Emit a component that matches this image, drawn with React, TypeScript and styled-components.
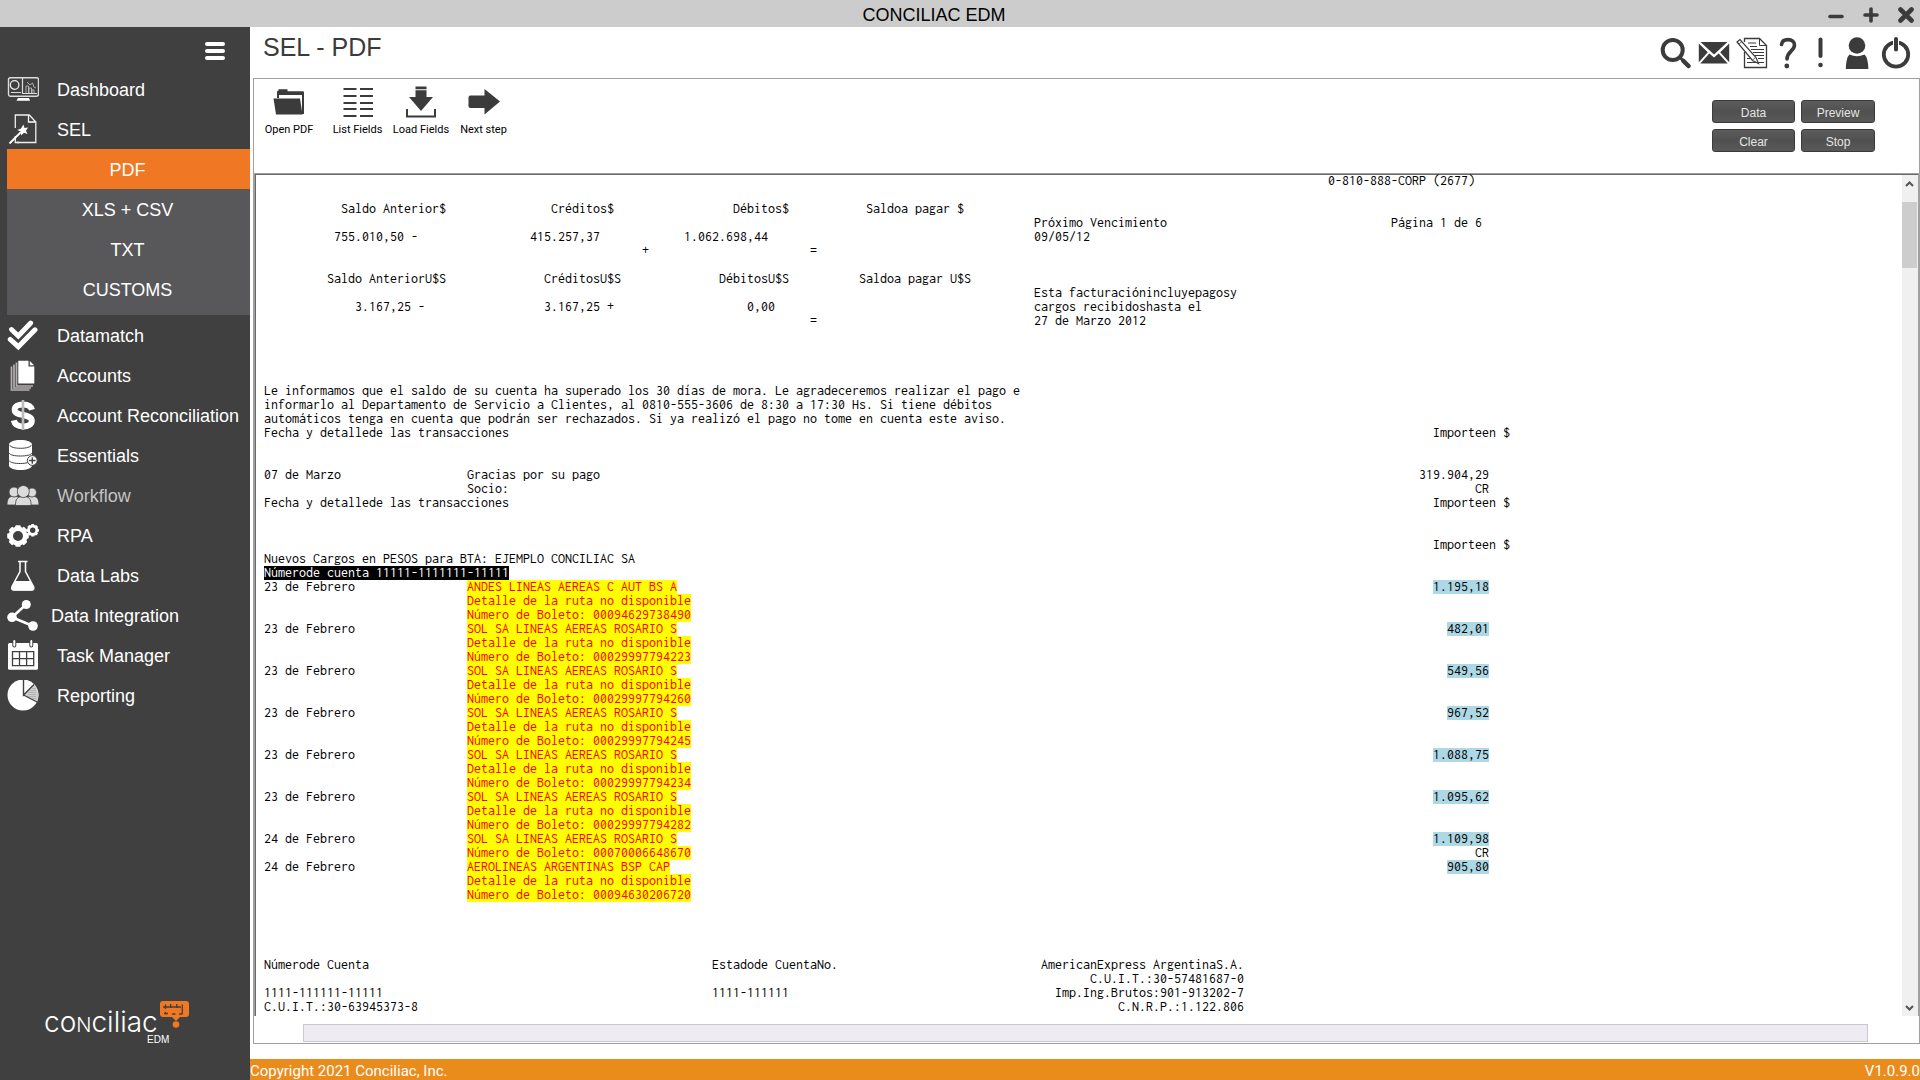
import React from "react";
import styled, { createGlobalStyle } from "styled-components";

const ink = "#3b3b3b";
const line = "#a0a0a0";

const GlobalStyle = createGlobalStyle`
  * { box-sizing: border-box; }
  body { margin: 0; background: #fff; font-family: "Liberation Sans", Arial, sans-serif; }
  button { font-family: inherit; border: 0; padding: 0; margin: 0; background: none; cursor: pointer; }
  svg { display: block; flex: none; }
`;

const Page = styled.div`
  min-height: 100vh;
  display: flex;
  flex-direction: column;
`;

const TitleBar = styled.header`
  height: 27px;
  flex: none;
  display: flex;
  align-items: center;
  background: #ccc;
  padding: 2px 6px 0 40px;
`;

const AppName = styled.div`
  flex: 1;
  text-align: center;
  font-size: 18px;
  line-height: 24px;
  color: #000;
`;

const WindowControls = styled.div`
  display: flex;
  gap: 19px;
`;

const IconButton = styled.button`
  display: flex;
  justify-content: center;
`;

const Body = styled.div`
  flex: 1;
  display: flex;
`;

const Sidebar = styled.aside`
  width: 250px;
  flex: none;
  display: flex;
  flex-direction: column;
  background: #404040;
`;

const MenuToggle = styled.div`
  height: 43px;
  display: flex;
  justify-content: flex-end;
  align-items: flex-start;
  padding: 14px 25px 0 0;
`;

const NavGroup = styled.nav`
  display: flex;
  flex-direction: column;
`;

const NavItem = styled.a<{ $near?: boolean; $muted?: boolean }>`
  height: 40px;
  display: flex;
  align-items: center;
  gap: ${(p) => (p.$near ? 12 : 18)}px;
  padding-left: 7px;
  font-size: 18px;
  line-height: 24px;
  white-space: nowrap;
  text-decoration: none;
  color: ${(p) => (p.$muted ? "#c4c4c4" : "#fff")};
`;

const SubMenu = styled.div`
  margin: -1px 0 1px 7px;
  padding-bottom: 6px;
  background: #58585a;
`;

const SubItem = styled.a<{ $active?: boolean }>`
  height: 40px;
  display: flex;
  align-items: center;
  justify-content: center;
  padding: 2px 2px 0 0;
  font-size: 18px;
  line-height: 24px;
  text-decoration: none;
  color: #fff;
  background: ${(p) => (p.$active ? "#f07824" : "transparent")};
`;

const Brand = styled.div`
  margin-top: auto;
  padding: 0 0 36px 44px;
`;

const Main = styled.main`
  flex: 1;
  min-width: 0;
  display: flex;
  flex-direction: column;
`;

const PageHeader = styled.div`
  height: 51px;
  display: flex;
  align-items: flex-start;
  justify-content: space-between;
  padding: 4px 8px 0 13px;
`;

const PageTitle = styled.h1`
  margin: 0;
  font-size: 25px;
  font-weight: 400;
  line-height: 32px;
  color: ${ink};
`;

const Actions = styled.div`
  display: flex;
  gap: 6px;
  padding-top: 6px;
`;

const Panel = styled.section`
  flex: 1;
  display: flex;
  flex-direction: column;
  margin: 0 0 15px 3px;
  border: 1px solid ${line};
`;

const Toolbar = styled.div`
  height: 95px;
  display: flex;
  align-items: flex-start;
  justify-content: space-between;
  padding: 7px 44px 0 0;
  border-bottom: 1px solid ${line};
`;

const Tools = styled.div`
  display: grid;
  grid-template-columns: 70px 67px 60px 65px;
`;

const Tool = styled.button`
  display: flex;
  flex-direction: column;
  align-items: center;
  gap: 4px;
  font-family: Roboto, "Liberation Sans", sans-serif;
  font-size: 11px;
  line-height: 16px;
  white-space: nowrap;
  color: #000;
`;

const Commands = styled.div`
  display: grid;
  grid-template-columns: 83px 74px;
  gap: 6px;
  padding-top: 14px;
`;

const Command = styled.button`
  height: 23px;
  padding-top: 2px;
  border: 1px solid #3a3a3a;
  border-radius: 3px;
  background: linear-gradient(#5c5c5c, #505050 50%, #595959);
  color: #e6e6e6;
  font-size: 12px;
  line-height: 18px;
`;

const Viewer = styled.div`
  flex: 1;
  display: flex;
  min-width: 0;
  border-left: 1px solid ${line};
  border-right: 1px solid ${line};
  box-shadow: inset 1px 1px #696969;
`;

const Report = styled.pre`
  flex: 1;
  min-width: 0;
  margin: 0;
  padding: 0 0 2px 9px;
  overflow: hidden;
  font-family: Inconsolata, "Noto Sans Mono CJK SC", "Liberation Mono", monospace;
  font-size: 14px;
  line-height: 14px;
  color: #000;
`;

const ReportLine = styled.div`
  height: 14px;
`;

type Tone = "plain" | "field" | "amount" | "key";
const tones: Record<Tone, [string, string]> = {
  plain: ["transparent", "#000"],
  field: ["#ff0", "#f00"],
  amount: ["#add8e6", "#000"],
  key: ["#000", "#fff"],
};

const Mark = styled.span<{ $tone: Tone }>`
  display: inline-block;
  height: 14px;
  vertical-align: top;
  background: ${(p) => tones[p.$tone][0]};
  color: ${(p) => tones[p.$tone][1]};
`;

const VerticalBar = styled.div`
  width: 16px;
  margin-top: 1px;
  display: flex;
  flex-direction: column;
  background: #f0f0f0;
`;

const Thumb = styled.div`
  height: 66px;
  margin: 9px 1px auto 0;
  background: #cdcdcd;
`;

const HorizontalBar = styled.div`
  height: 18px;
  margin: 8px 51px 1px 49px;
  background: #eeecf2;
  border: 1px solid #c9c8d6;
`;

const Footer = styled.footer`
  height: 21px;
  flex: none;
  display: flex;
  justify-content: space-between;
  background: #ea8c1c;
  color: #fff;
  font-family: Roboto, sans-serif;
  font-size: 15px;
  line-height: 24px;
`;

const Art = ({ w = 32, h = 32, children }: { w?: number; h?: number; children: React.ReactNode }) => (
  <svg width={w} height={h} viewBox={`0 0 ${w} ${h}`} fill="none" aria-hidden="true">
    {children}
  </svg>
);

const gear = (cx: number, cy: number, r: number, hole: number, teeth: number) => (
  <g>
    <circle cx={cx} cy={cy} r={(r * 0.88 + hole) / 2} stroke="#fff" strokeWidth={r * 0.88 - hole} />
    {Array.from({ length: teeth }, (_, i) => (
      <rect
        key={i}
        x={cx - r * 0.25}
        y={cy - r}
        width={r * 0.5}
        height={r * 0.3}
        rx={r * 0.1}
        fill="#fff"
        transform={`rotate(${(i * 360) / teeth} ${cx} ${cy})`}
      />
    ))}
  </g>
);

const icons: Record<string, React.ReactNode> = {
  dashboard: (
    <Art>
      <rect x="1.5" y="3.7" width="30" height="18.6" rx="2" stroke="#ddd" strokeWidth="1.4" />
      <circle cx="7.6" cy="11" r="4.3" stroke="#eee" strokeWidth="1.2" />
      <path d="M4 18.5h10M15.5 4v15.500H30" stroke="#ddd" strokeWidth="1.2" />
      <path d="M19 19v-7h2.500v7M22 19v-5h2.500v5M25 19v-3h2v3M20 8l3 3 2.500-2 1.500 4 2 1" stroke="#ccc" strokeWidth=".8" />
      <path d="M11 24h11l1 2.700H9.500z" fill="#fff" />
    </Art>
  ),
  sel: (
    <Art>
      <path d="M8.300 14V1h14l6.500 7v20.500H10" stroke="#eee" strokeWidth="1.300" />
      <path d="M8.300 22v6.500H12" stroke="#eee" strokeWidth="1.300" />
      <path d="M21.500 1.200V8h7" stroke="#fff" strokeWidth="1.300" />
      <path d="M2.500 29.500 14 18" stroke="#fff" strokeWidth="1.800" />
      <path d="m16.500 10.500 1 3.500 3.700-.6-2.300 3 1.600 3.500-3.500-1.100-3 2.700-.1-3.900-3.700-1.600 3.500-1.300z" fill="#fff" />
    </Art>
  ),
  datamatch: (
    <Art>
      <path d="m4.500 9.500 6.800 6.500L23.700 3" stroke="#fff" strokeWidth="4.800" strokeLinecap="round" />
      <path d="m3.300 19.500 8 7.200L28 9.800" stroke="#fff" strokeWidth="5" strokeLinecap="round" />
    </Art>
  ),
  accounts: (
    <Art>
      <path d="M4.500 6.500v23.500h18M7 4.500V28h17M9.500 2.500V26H26" stroke="#b5b0b0" strokeWidth="1.700" />
      <path d="M11.300.8h10.200v5.700h5.800v17H11.300z" fill="#fff" />
      <path d="m22.800 1 4.300 4.300h-4.300z" fill="#fff" />
    </Art>
  ),
  dollar: (
    <Art>
      <path
        d="M25 9.800C24 5.800 20.500 4.400 16 4.400c-5 0-8.300 2-8.300 5.300 0 3.800 4 4.400 8.300 5.300 4.800 1 8.800 1.900 8.800 5.800 0 3.600-3.600 5.600-8.800 5.600-5 0-8.300-1.800-9.200-6"
        stroke="#fff"
        strokeWidth="6"
      />
      <path d="M16 0v30" stroke="#bbb" strokeWidth="2.600" />
    </Art>
  ),
  essentials: (
    <Art>
      <path d="M2 4.500C2 2 7 0 13.500 0S25 2 25 4.500v21c0 2.500-5 4.500-11.500 4.500S2 28 2 25.500z" fill="#fff" />
      <path d="M2.500 5c1 2 5 3.300 11 3.300S23.500 7 24.500 5M2 13c1 2 5.500 3 11.500 3S24 15 25 13M2 20.500c1 2 5.500 3 11.500 3 3 0 5-.3 7-.8" stroke="#404040" strokeWidth="1" />
      <circle cx="25.300" cy="20.500" r="4.900" fill="#fff" stroke="#404040" strokeWidth="1" />
      <path d="M25.300 17.300v6.400M22.100 20.500h6.400" stroke="#404040" strokeWidth="1.300" />
    </Art>
  ),
  workflow: (
    <Art>
      <g fill="#dcdcdc" stroke="#404040" strokeWidth=".8">
        <path d="M0 25c0-6 2-9 7-9s7 3 7 9zM18 25c0-6 2-9 7-9s7 3 7 9z" />
        <circle cx="7" cy="12" r="5" />
        <circle cx="25" cy="12.500" r="4.500" />
        <path d="M8.500 25.500c0-7 2-9 7.800-9s7.800 2 7.800 9z" />
        <circle cx="16.300" cy="11.500" r="6" />
      </g>
    </Art>
  ),
  rpa: (
    <Art>
      {gear(11, 16, 10.8, 5, 8)}
      {gear(25.7, 10.3, 6.2, 2.7, 8)}
    </Art>
  ),
  labs: (
    <Art>
      <path d="M11 1.400h9.500M13 2v9.500L5 26.500c-1 2 0 3.500 2 3.500h17.500c2 0 3-1.500 2-3.500l-8-15V2" stroke="#fff" strokeWidth="1.500" />
      <path d="M8 21h15.500l3.500 6.500c.5 1.500-.5 3-2 3H6.500c-1.500 0-2.500-1.500-2-3z" fill="#fff" />
    </Art>
  ),
  integration: (
    <Art>
      <path d="M19.300 4.300 5 17.300 26 26" stroke="#fff" strokeWidth="2.600" />
      <g fill="#fff">
        <circle cx="19.300" cy="4.500" r="4.500" />
        <circle cx="5" cy="17.300" r="4.800" />
        <circle cx="26" cy="26" r="4.800" />
      </g>
    </Art>
  ),
  tasks: (
    <Art>
      <rect x="1" y="3" width="30" height="26.700" rx="1.500" fill="#fff" />
      <path d="M7.300 1v4.500M24.300 1v4.500" stroke="#404040" strokeWidth="4" strokeLinecap="round" />
      <path d="M7.300 1v4.500M24.300 1v4.500" stroke="#fff" strokeWidth="2" strokeLinecap="round" />
      <path d="M5.500 11.700h21.200v14H5.500zM5.500 18.700h21.200M12.500 11.700v14M19.600 11.700v14" stroke="#404040" strokeWidth="1.300" />
    </Art>
  ),
  reporting: (
    <Art>
      <circle cx="16" cy="15" r="15.500" fill="#fff" />
      <path d="M16 15 27 4.500A15.500 15.500 0 0 1 30 21.500z" fill="#cfcfcf" />
      <path d="M16.500-1v16L27 4.500M16.500 15 30 22" stroke="#404040" strokeWidth="1.400" />
      <path d="M22 12v5M24 10v8M26 8v11M28 8v12" stroke="#777" strokeWidth=".6" strokeDasharray="1 1" />
    </Art>
  ),
};

const Logo = () => (
  <svg width="146" height="43" viewBox="0 0 146 43" role="img" aria-label="Conciliac EDM">
    <text x="0" y="31" fill="#fff" fontFamily="Inter, sans-serif" fontWeight="300" fontSize="28">
      co<tspan fontSize="20">N</tspan>ciliac
      <tspan x="103" y="42" fontFamily="Liberation Sans, sans-serif" fontWeight="400" fontSize="10">
        EDM
      </tspan>
    </text>
    <path d="M119 0h23q3 0 3 3v10q0 3-3 3h-6l-4 4-4-4h-9q-3 0-3-3V3q0-3 3-3z" fill="#f07824" />
    <path d="M119 6h18M121.500 3.500v10M126.700 3v4M132.700 3v4M138.300 3.500v9.500M120 12.500h4M128 13h3.500M135 13h3.500" stroke="#404040" strokeWidth="1.300" />
    <circle cx="122" cy="9.500" r="1.800" fill="#f07824" />
    <circle cx="127" cy="10" r="2.600" fill="#f07824" />
    <circle cx="133.500" cy="10" r="2.600" fill="#f07824" />
    <circle cx="132" cy="23.500" r="3.300" fill="#f07824" />
  </svg>
);

type Nav = { label: string; icon: string; near?: boolean; muted?: boolean };
const topNav: Nav[] = [
  { label: "Dashboard", icon: "dashboard" },
  { label: "SEL", icon: "sel" },
];
const subNav = ["PDF", "XLS + CSV", "TXT", "CUSTOMS"];
const lowNav: Nav[] = [
  { label: "Datamatch", icon: "datamatch" },
  { label: "Accounts", icon: "accounts" },
  { label: "Account Reconciliation", icon: "dollar" },
  { label: "Essentials", icon: "essentials" },
  { label: "Workflow", icon: "workflow", muted: true },
  { label: "RPA", icon: "rpa" },
  { label: "Data Labs", icon: "labs" },
  { label: "Data Integration", icon: "integration", near: true },
  { label: "Task Manager", icon: "tasks" },
  { label: "Reporting", icon: "reporting" },
];

const NavList = ({ items }: { items: Nav[] }) => (
  <NavGroup>
    {items.map((n) => (
      <NavItem key={n.label} href="#" $near={n.near} $muted={n.muted}>
        {icons[n.icon]}
        {n.label}
      </NavItem>
    ))}
  </NavGroup>
);

const actions: { label: string; art: React.ReactNode }[] = [
  {
    label: "Search",
    art: (
      <Art>
        <circle cx="12.700" cy="13" r="10" stroke={ink} strokeWidth="4" />
        <path d="m20 20.500 3.500 3.500" stroke={ink} strokeWidth="3" />
        <path d="m23.500 24 5 5" stroke={ink} strokeWidth="4.500" strokeLinecap="round" />
      </Art>
    ),
  },
  {
    label: "Mail",
    art: (
      <Art>
        <path d="M2.500 5h27L16 17.500zM.8 6.500l9 8.700-9 10zM31.200 6.500l-9 8.700 9 10zM11.300 16.500l4.700 4 4.700-4 9 10H2.300z" fill={ink} />
      </Art>
    ),
  },
  {
    label: "Notes",
    art: (
      <Art>
        <path d="M8.500 5V1.500h15l7 7V30.500h-22V15" stroke={ink} strokeWidth="1.300" />
        <path d="M23.500 1.500v7h7" stroke={ink} strokeWidth="1" />
        <path d="M12 6h8M14 9.500h7M15 12.500h13M17 15.500h11M18 18.500h10M11 21.500h6M22 21.500h6M11 25.500h17" stroke={ink} strokeWidth="1" />
        <path d="m1 5 3-2.500 16 18 2.500 6-6-3z" fill="#fff" stroke={ink} strokeWidth="1.200" />
        <path d="m3 7 3-2.500M16.500 23l3-2.500" stroke={ink} strokeWidth=".8" />
      </Art>
    ),
  },
  {
    label: "Help",
    art: (
      <Art w={28}>
        <path d="M7.500 7.500C8 4 10.500 2.600 14 2.600c4 0 6.500 2.200 6.500 5.400 0 6-7.500 6.500-7.500 14" stroke={ink} strokeWidth="3.600" strokeLinecap="round" />
        <circle cx="12.800" cy="29" r="2.400" fill={ink} />
      </Art>
    ),
  },
  {
    label: "Alerts",
    art: (
      <Art w={26}>
        <path d="M12.500 2.500v16.500" stroke={ink} strokeWidth="4" strokeLinecap="round" />
        <circle cx="12.500" cy="28" r="2.300" fill={ink} />
      </Art>
    ),
  },
  {
    label: "User",
    art: (
      <Art w={34}>
        <circle cx="17" cy="8.500" r="8.300" fill={ink} />
        <path d="M9.500 17.500q7.500 3.500 15 0 3.500 3 3.900 14.500H5.800q.3-11.500 3.700-14.500z" fill={ink} />
      </Art>
    ),
  },
  {
    label: "Log out",
    art: (
      <Art>
        <circle cx="16" cy="17.500" r="12.200" stroke={ink} strokeWidth="3.800" />
        <path d="M16 1v12" stroke="#fff" strokeWidth="6" />
        <path d="M16 2v10.500" stroke={ink} strokeWidth="4" strokeLinecap="round" />
      </Art>
    ),
  },
];

const tools: { label: string; art: React.ReactNode }[] = [
  {
    label: "Open PDF",
    art: (
      <Art>
        <path d="M4 12V6q0-1.500 1.500-1.500V3.300h9v2H30q1 0 1 1V28h-2V9H6v3z" fill={ink} />
        <path d="M.5 12.500h26.500l2.500 16H3z" fill={ink} />
      </Art>
    ),
  },
  {
    label: "List Fields",
    art: (
      <Art>
        {[3, 10, 17, 23, 30].map((y) => (
          <path key={y} d={`M1.500 ${y}h13M18 ${y}h13`} stroke={ink} strokeWidth="2" />
        ))}
      </Art>
    ),
  },
  {
    label: "Load Fields",
    art: (
      <Art>
        <path d="M10.500.5h11v2.800h-11zM10.500 4.300h11V11h6.500L16 25 4 11h6.500z" fill={ink} />
        <path d="M2 23v7.500h28V23" stroke={ink} strokeWidth="2" />
      </Art>
    ),
  },
  {
    label: "Next step",
    art: (
      <Art>
        <path d="M2.500 9.500h14V3L32 15.500 16.500 28.500V22h-14Q.5 22 .5 20v-8.500q0-2 2-2z" fill={ink} />
      </Art>
    ),
  },
];

type Seg = [col: number, text: string, tone?: Tone];
const report: Record<number, Seg[]> = {
  0: [[152, "0-810-888-CORP (2677)"]],
  2: [[11, "Saldo Anterior$"], [41, "Créditos$"], [67, "Débitos$"], [86, "Saldoa pagar $"]],
  3: [[110, "Próximo Vencimiento"], [161, "Página 1 de 6"]],
  4: [[10, "755.010,50 -"], [38, "415.257,37"], [60, "1.062.698,44"], [110, "09/05/12"]],
  5: [[54, "+"], [78, "="]],
  7: [[9, "Saldo AnteriorU$S"], [40, "CréditosU$S"], [65, "DébitosU$S"], [85, "Saldoa pagar U$S"]],
  8: [[110, "Esta facturaciónincluyepagosy"]],
  9: [[13, "3.167,25 -"], [40, "3.167,25 +"], [69, "0,00"], [110, "cargos recibidoshasta el"]],
  10: [[78, "="], [110, "27 de Marzo 2012"]],
  15: [[0, "Le informamos que el saldo de su cuenta ha superado los 30 días de mora. Le agradeceremos realizar el pago e"]],
  16: [[0, "informarlo al Departamento de Servicio a Clientes, al 0810-555-3606 de 8:30 a 17:30 Hs. Si tiene débitos"]],
  17: [[0, "automáticos tenga en cuenta que podrán ser rechazados. Si ya realizó el pago no tome en cuenta este aviso."]],
  18: [[0, "Fecha y detallede las transacciones"], [167, "Importeen $"]],
  21: [[0, "07 de Marzo"], [29, "Gracias por su pago"], [165, "319.904,29"]],
  22: [[29, "Socio:"], [173, "CR"]],
  23: [[0, "Fecha y detallede las transacciones"], [167, "Importeen $"]],
  26: [[167, "Importeen $"]],
  27: [[0, "Nuevos Cargos en PESOS para BTA: EJEMPLO CONCILIAC SA"]],
  28: [[0, "Númerode cuenta 11111-1111111-11111", "key"]],
  56: [[0, "Númerode Cuenta"], [64, "Estadode CuentaNo."], [111, "AmericanExpress ArgentinaS.A."]],
  57: [[118, "C.U.I.T.:30-57481687-0"]],
  58: [[0, "1111-111111-11111"], [64, "1111-111111"], [113, "Imp.Ing.Brutos:901-913202-7"]],
  59: [[0, "C.U.I.T.:30-63945373-8"], [122, "C.N.R.P.:1.122.806"]],
};

const route = "Detalle de la ruta no disponible";
const sol = "SOL SA LINEAS AEREAS ROSARIO S";
const charges: [row: number, date: string, amount: string, details: string[]][] = [
  [29, "23 de Febrero", "1.195,18", ["ANDES LINEAS AEREAS C AUT BS A", route, "Número de Boleto: 00094629738490"]],
  [32, "23 de Febrero", "482,01", [sol, route, "Número de Boleto: 00029997794223"]],
  [35, "23 de Febrero", "549,56", [sol, route, "Número de Boleto: 00029997794260"]],
  [38, "23 de Febrero", "967,52", [sol, route, "Número de Boleto: 00029997794245"]],
  [41, "23 de Febrero", "1.088,75", [sol, route, "Número de Boleto: 00029997794234"]],
  [44, "23 de Febrero", "1.095,62", [sol, route, "Número de Boleto: 00029997794282"]],
  [47, "24 de Febrero", "1.109,98", [sol, "Número de Boleto: 00070006648670"]],
  [49, "24 de Febrero", "905,80", ["AEROLINEAS ARGENTINAS BSP CAP", route, "Número de Boleto: 00094630206720"]],
];
charges.forEach(([row, date, amount, details]) => {
  details.forEach((d, i) => {
    report[row + i] = [[29, d, "field"]];
  });
  report[row].unshift([0, date]);
  report[row].push([175 - amount.length, amount, "amount"]);
});
report[48].push([173, "CR"]);

const renderLine = (segs: Seg[]) => {
  let at = 0;
  return segs.map(([col, text, tone = "plain"]) => {
    const pad = " ".repeat(col - at);
    at = col + text.length;
    return (
      <React.Fragment key={col}>
        {pad}
        <Mark $tone={tone}>{text}</Mark>
      </React.Fragment>
    );
  });
};

export default function App() {
  return (
    <Page>
      <GlobalStyle />
      <TitleBar>
        <AppName>CONCILIAC EDM</AppName>
        <WindowControls>
          {[
            ["Minimize", "M2 9.500h12"],
            ["Maximize", "M2 8h12M8 2v12"],
            ["Close", "m2.500 2.500 11 11m0-11-11 11"],
          ].map(([label, d]) => (
            <IconButton key={label} aria-label={label}>
              <Art w={16} h={16}>
                <path d={d} stroke={ink} strokeWidth={label === "Close" ? 4.600 : 3.600} strokeLinecap="round" />
              </Art>
            </IconButton>
          ))}
        </WindowControls>
      </TitleBar>
      <Body>
        <Sidebar>
          <MenuToggle>
            <IconButton aria-label="Toggle menu">
              <Art w={20} h={20}>
                <path d="M2 3h16M2 10h16M2 17h16" stroke="#fff" strokeWidth="4" strokeLinecap="round" />
              </Art>
            </IconButton>
          </MenuToggle>
          <NavList items={topNav} />
          <SubMenu>
            {subNav.map((s) => (
              <SubItem key={s} href="#" $active={s === "PDF"}>
                {s}
              </SubItem>
            ))}
          </SubMenu>
          <NavList items={lowNav} />
          <Brand>
            <Logo />
          </Brand>
        </Sidebar>
        <Main>
          <PageHeader>
            <PageTitle>SEL - PDF</PageTitle>
            <Actions>
              {actions.map((a) => (
                <IconButton key={a.label} aria-label={a.label}>
                  {a.art}
                </IconButton>
              ))}
            </Actions>
          </PageHeader>
          <Panel>
            <Toolbar>
              <Tools>
                {tools.map((t) => (
                  <Tool key={t.label}>
                    {t.art}
                    {t.label}
                  </Tool>
                ))}
              </Tools>
              <Commands>
                {["Data", "Preview", "Clear", "Stop"].map((c) => (
                  <Command key={c}>{c}</Command>
                ))}
              </Commands>
            </Toolbar>
            <Viewer>
              <Report>
                {Array.from({ length: 60 }, (_, i) => (
                  <ReportLine key={i}>{report[i] ? renderLine(report[i]) : null}</ReportLine>
                ))}
              </Report>
              <VerticalBar>
                <Art w={16} h={18}>
                  <path d="m4 11 3.500-3.500L11 11" stroke="#555" strokeWidth="2" />
                </Art>
                <Thumb />
                <Art w={16} h={18}>
                  <path d="m4 8 3.500 3.500L11 8" stroke="#555" strokeWidth="2" />
                </Art>
              </VerticalBar>
            </Viewer>
            <HorizontalBar />
          </Panel>
          <Footer>
            <span>Copyright 2021 Conciliac, Inc.</span>
            <span>V1.0.9.0</span>
          </Footer>
        </Main>
      </Body>
    </Page>
  );
}
